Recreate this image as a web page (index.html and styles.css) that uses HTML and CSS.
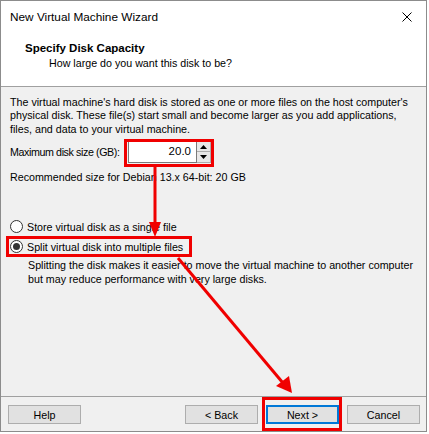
FILE: index.html
```html
<!DOCTYPE html>
<html>
<head>
<meta charset="utf-8">
<link rel="stylesheet" href="styles.css">
</head>
<body>
<div class="window">
  <div class="header">
    <div class="titlebar">
      <span class="title">New Virtual Machine Wizard</span>
      <svg class="close" width="10" height="10" viewBox="0 0 10 10"><path d="M0.5 0.5 L9.5 9.5 M9.5 0.5 L0.5 9.5" stroke="#000" stroke-width="1" fill="none"/></svg>
    </div>
    <div class="page-title">Specify Disk Capacity</div>
    <div class="page-sub">How large do you want this disk to be?</div>
  </div>
  <div class="content">
    <p class="intro">The virtual machine's hard disk is stored as one or more files on the host computer's physical disk. These file(s) start small and become larger as you add applications, files, and data to your virtual machine.</p>
    <div class="size-row">
      <span class="label">Maximum disk size (GB):</span>
      <div class="spin">
        <div class="spin-field">20.0</div>
        <div class="spin-btns">
          <div class="spin-btn"><svg width="7" height="4" viewBox="0 0 7 4"><path d="M3.5 0 L7 4 L0 4 Z" fill="#000"/></svg></div>
          <div class="spin-btn"><svg width="7" height="4" viewBox="0 0 7 4"><path d="M0 0 L7 0 L3.5 4 Z" fill="#000"/></svg></div>
        </div>
      </div>
    </div>
    <div class="recommend">Recommended size for Debian 13.x 64-bit: 20 GB</div>
    <div class="radios">
      <label class="radio"><span class="dot"></span>Store virtual disk as a single file</label>
      <label class="radio checked"><span class="dot"></span>Split virtual disk into multiple files</label>
      <p class="desc">Splitting the disk makes it easier to move the virtual machine to another computer<br>but may reduce performance with very large disks.</p>
    </div>
  </div>
  <div class="footer">
    <button class="btn">Help</button>
    <div class="spacer"></div>
    <button class="btn">&lt; Back</button>
    <button class="btn primary">Next &gt;</button>
    <button class="btn">Cancel</button>
  </div>
  <svg class="annot" width="429" height="434" viewBox="0 0 429 434">
    <g fill="none" stroke="#f00000" stroke-width="3">
      <rect x="125.5" y="140.5" width="87" height="25"/>
      <rect x="7.5" y="237.5" width="183" height="18"/>
      <rect x="263.5" y="398.5" width="77" height="31"/>
      <line x1="155" y1="167" x2="155" y2="226"/>
      <line x1="178" y1="258" x2="283" y2="383"/>
    </g>
    <g fill="#f00000">
      <path d="M149 222 L161 222 L155 237 Z"/>
      <path d="M276 386 L289 376 L292 393 Z"/>
    </g>
  </svg>
</div>
</body>
</html>
```
FILE: styles.css
```css
* { box-sizing: border-box; }
html, body { margin: 0; padding: 0; background: #fff; }
body {
  font-family: "Liberation Sans", Arial, sans-serif;
  font-size: 10.7px;
  color: #000;
}
.window {
  position: relative;
  width: 427px;
  height: 432px;
  border: 1px solid #8c8c8c;
  display: flex;
  flex-direction: column;
  background: #f0f0f0;
}
.header {
  background: #fff;
  height: 86px;
  border-bottom: 1px solid #a0a0a0;
  flex: none;
}
.titlebar {
  height: 31px;
  display: flex;
  align-items: center;
  justify-content: space-between;
  padding: 0 14px 0 9px;
}
.title {
  font-size: 11.8px;
}
.close { display: block; }
.page-title {
  font-weight: bold;
  font-size: 11.5px;
  padding-left: 24px;
  line-height: 14px;
  margin-top: 9px;
}
.page-sub {
  padding-left: 48px;
  line-height: 14px;
  margin-top: 1px;
}
.content {
  flex: 1;
  padding: 9px 8px 0 9px;
}
.intro {
  margin: 0;
  line-height: 13.3px;
}
.size-row {
  display: flex;
  align-items: center;
  margin-top: 5px;
  height: 22px;
}
.label {
  white-space: nowrap;
  width: 118px;
  flex: none;
  letter-spacing: -0.4px;
}
.spin {
  display: flex;
  height: 22px;
  flex: none;
}
.spin-field {
  width: 69px;
  background: #fff;
  border: 1px solid #7a7a7a;
  text-align: right;
  padding: 3px 5px 0 0;
  font-size: 11.5px;
}
.spin-btns {
  display: flex;
  flex-direction: column;
  width: 14px;
  border: 1px solid #adadad;
  border-left: none;
  background: #fff;
}
.spin-btn {
  flex: 1;
  display: flex;
  align-items: center;
  justify-content: center;
  background: #e8e8e8;
  border-bottom: 1px solid #adadad;
}
.spin-btn:last-child { border-bottom: none; }
.recommend {
  margin-top: 7px;
  line-height: 14px;
}
.radios {
  margin-top: 33px;
}
.radio {
  display: flex;
  align-items: center;
  height: 20px;
  gap: 4px;
}
.dot {
  width: 13px;
  height: 13px;
  border: 1px solid #333;
  border-radius: 50%;
  background: #fff;
  display: flex;
  align-items: center;
  justify-content: center;
}
.checked .dot::after {
  content: "";
  width: 7px;
  height: 7px;
  border-radius: 50%;
  background: #333;
}
.desc {
  margin: 2px 0 0 18px;
  line-height: 13.7px;
}
.footer {
  flex: none;
  height: 35px;
  border-top: 1px solid #a0a0a0;
  display: flex;
  align-items: flex-start;
  padding: 8px 6px 0 7px;
  gap: 8px;
}
.spacer { flex: 1; }
.btn {
  width: 73px;
  height: 19px;
  background: #e1e1e1;
  border: 1px solid #adadad;
  font-family: "Liberation Sans", Arial, sans-serif;
  font-size: 10.7px;
  color: #000;
  padding: 0;
}
.btn.primary {
  border: 2px solid #0078d7;
}
.annot {
  position: absolute;
  left: -1px;
  top: -1px;
  pointer-events: none;
}
```
